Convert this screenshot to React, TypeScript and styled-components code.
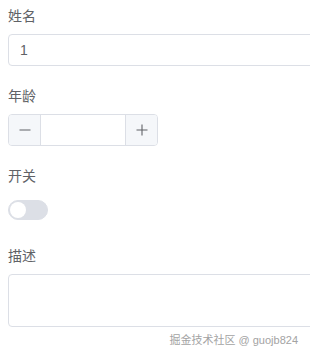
import React from 'react'
import styled, { createGlobalStyle } from 'styled-components'

const GlobalStyle = createGlobalStyle`
    html, body {
        margin: 0;
        padding: 0;
        background: #fff;
        overflow: hidden;
    }
    body {
        font-family: "Noto Sans CJK SC", "Liberation Sans", sans-serif;
        -webkit-font-smoothing: antialiased;
    }
`

const Page = styled.div`
    position: relative;
    width: 310px;
    height: 356px;
    overflow: hidden;
`

const Form = styled.form`
    width: 340px;
    padding: 4px 0 0 8px;
`

const FormItem = styled.div`
    margin-bottom: 18px;
`

const Label = styled.label`
    display: block;
    height: 22px;
    line-height: 22px;
    margin-bottom: 8px;
    font-size: 14px;
    color: #606266;
`

const Content = styled.div`
    display: flex;
    align-items: center;
    min-height: 32px;
`

const TextInput = styled.input`
    box-sizing: border-box;
    width: 100%;
    height: 32px;
    padding: 0 11px;
    border: 1px solid #dcdfe6;
    border-radius: 4px;
    font-family: "Liberation Sans", "Noto Sans CJK SC", sans-serif;
    font-size: 14px;
    color: #606266;
    outline: none;
`

const NumberBox = styled.div`
    box-sizing: border-box;
    display: flex;
    width: 150px;
    height: 32px;
    border: 1px solid #dcdfe6;
    border-radius: 4px;
    overflow: hidden;
`

const StepButton = styled.button<{ $side: 'left' | 'right' }>`
    flex: 0 0 32px;
    display: flex;
    align-items: center;
    justify-content: center;
    padding: 0;
    border: none;
    ${p => p.$side === 'left' ? 'border-right' : 'border-left'}: 1px solid #dcdfe6;
    background: #f5f7fa;
    color: #606266;
`

const NumberField = styled.input`
    flex: 1;
    min-width: 0;
    border: none;
    outline: none;
    text-align: center;
    font-size: 14px;
    color: #606266;
`

const Switch = styled.span`
    position: relative;
    display: inline-block;
    box-sizing: border-box;
    width: 40px;
    height: 20px;
    border-radius: 10px;
    background: #dcdfe6;
    border: 1px solid #dcdfe6;
`

const Knob = styled.span`
    position: absolute;
    top: 1px;
    left: 1px;
    width: 16px;
    height: 16px;
    border-radius: 50%;
    background: #fff;
`

const TextArea = styled.textarea`
    box-sizing: border-box;
    display: block;
    width: 100%;
    height: 53px;
    padding: 5px 11px;
    border: 1px solid #dcdfe6;
    border-radius: 4px;
    resize: none;
    outline: none;
    font-size: 14px;
    line-height: 1.5;
`

const Watermark = styled.div`
    position: absolute;
    right: 12px;
    top: 331px;
    font-size: 11px;
    line-height: 18px;
    color: #a3a3a3;
    font-family: "Liberation Sans", "Noto Sans CJK SC", sans-serif;
`

const Minus = () => (
    <svg width="12" height="12" viewBox="0 0 12 12">
        <path d="M0.5 6h11" stroke="#606266" strokeWidth="1.1" />
    </svg>
)

const Plus = () => (
    <svg width="12" height="12" viewBox="0 0 12 12">
        <path d="M0.5 6h11M6 0.5v11" stroke="#606266" strokeWidth="1.1" />
    </svg>
)

export default function App() {
    return (
        <Page>
            <GlobalStyle />
            <Form onSubmit={e => e.preventDefault()}>
                <FormItem>
                    <Label>姓名</Label>
                    <Content>
                        <TextInput defaultValue="1" />
                    </Content>
                </FormItem>
                <FormItem>
                    <Label>年龄</Label>
                    <Content>
                        <NumberBox>
                            <StepButton type="button" $side="left"><Minus /></StepButton>
                            <NumberField />
                            <StepButton type="button" $side="right"><Plus /></StepButton>
                        </NumberBox>
                    </Content>
                </FormItem>
                <FormItem>
                    <Label>开关</Label>
                    <Content>
                        <Switch><Knob /></Switch>
                    </Content>
                </FormItem>
                <FormItem>
                    <Label>描述</Label>
                    <TextArea />
                </FormItem>
            </Form>
            <Watermark>掘金技术社区 @ guojb824</Watermark>
        </Page>
    )
}
